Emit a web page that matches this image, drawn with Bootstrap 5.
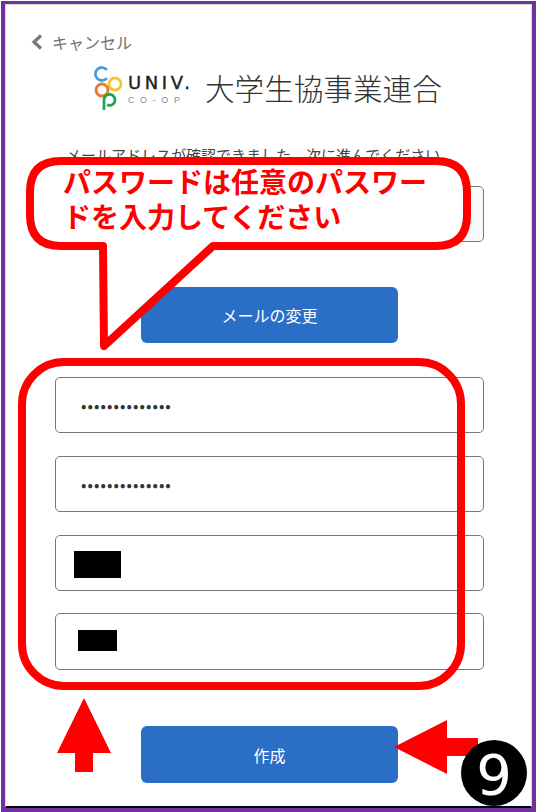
<!DOCTYPE html>
<html lang="ja">
<head>
    <meta charset="UTF-8">
    <meta name="viewport" content="width=device-width, initial-scale=1.0">
    <title>大学生協事業連合 アカウント作成</title>
    <link href="https://cdn.jsdelivr.net/npm/bootstrap@5.3.0/dist/css/bootstrap.min.css" rel="stylesheet">
    <style>
        html, body { height: 100%; overflow: hidden; background: #fff; }
        body { font-family: "Noto Sans CJK JP", "Liberation Sans", sans-serif; }
        .shot-frame { position: relative; width: 535px; height: 811px; margin: 1px 0 0 1px; border: 4px solid #7030a0; border-top-width: 3px; overflow: hidden; }
        .shot-inner { height: 100%; border: 1px solid #d9d9d9; border-bottom: 2px solid #000; padding: 22px 48px 0 25px; }
        .cancel-row { height: 30px; color: #707070; font-size: 16px; }
        .cancel-row svg { margin-right: 9px; }
        .logo-row { height: 50px; margin: 6px 0 0 62px; color: #333; }
        .logo-univ { width: 70px; margin: 0 7px 0 3px; line-height: 1; white-space: nowrap; }
        .logo-univ-top { font: 400 18px "DejaVu Sans", sans-serif; letter-spacing: 3.6px; color: #222; -webkit-text-stroke: .4px #222; }
        .logo-univ-sub { font: 400 9px "Liberation Sans", sans-serif; letter-spacing: 5.6px; color: #8a8a8a; margin-top: 2px; }
        .logo-name { font-size: 29.6px; font-weight: 300; line-height: 1; white-space: nowrap; }
        .notice { margin: 31px 0 0 35px; font-size: 15px; color: #444; line-height: 22px; height: 22px; white-space: nowrap; }
        .shot-input.form-control { display: block; width: 429px; height: 56px; margin-left: 24px; padding: 0 25px; border: 1px solid #777; border-radius: 5px; color: #333; }
        .shot-input[type=password] { letter-spacing: 1.05px; }
        .shot-input.email-box { background: #f8f9fa; margin-top: 20px; }
        .gap-big { margin-top: 23px; }
        .gap-last { margin-top: 22px; height: 57px !important; }
        .shot-btn.btn { display: block; width: 257px; height: 56px; padding: 0; border: 0; border-radius: 6px; background: #2a6ec6; color: #fff; font-size: 16px; font-weight: 400; }
        .btn-one { margin: 45px 0 34px 110px; }
        .shot-btn.btn-two { height: 57px; margin: 56px 0 0 110px; }
        .mark-layer { position: absolute; left: -5px; top: -4px; width: 537px; height: 812px; pointer-events: none; }
        .redact { position: absolute; background: #000; }
        .redact-a { left: 69px; top: 547px; width: 47px; height: 27px; }
        .redact-b { left: 73px; top: 626px; width: 39px; height: 21px; }
        .callout-text { position: absolute; left: 58px; top: 160px; font-size: 28px; font-weight: 700; line-height: 35px; color: #f00; white-space: nowrap; }
        .step-num { font: 400 56px "DejaVu Sans", sans-serif; fill: #fff; }
    </style>
</head>
<body>
    <div class="shot-frame">
        <div class="shot-inner">
            <div class="cancel-row d-flex align-items-center">
                <svg width="12" height="16" viewBox="0 0 12 16"><path d="M10 1.5 3 8l7 6.5" fill="none" stroke="#7a7a7a" stroke-width="3.2"/></svg>
                キャンセル
            </div>
            <div class="logo-row d-flex align-items-center">
                <svg width="32" height="46" viewBox="0 0 32 46">
                    <path d="M14 5a6.5 6.5 0 1 0 0 8" fill="none" stroke="#4a9bd8" stroke-width="2.8"/>
                    <circle cx="22" cy="19" r="6" fill="none" stroke="#f4c52e" stroke-width="2.8"/>
                    <circle cx="9" cy="25" r="6" fill="none" stroke="#e8792c" stroke-width="2.8"/>
                    <path d="M11 45V35a5.5 5.5 0 1 1 3 4.8" fill="none" stroke="#1fa35b" stroke-width="2.8"/>
                </svg>
                <div class="logo-univ">
                    <div class="logo-univ-top">UNIV.</div>
                    <div class="logo-univ-sub">CO-OP</div>
                </div>
                <div class="logo-name">大学生協事業連合</div>
            </div>
            <p class="notice mb-0">メールアドレスが確認できました。次に進んでください</p>
            <input class="form-control shot-input email-box" type="text" readonly>
            <button class="btn shot-btn btn-one" type="button">メールの変更</button>
            <input class="form-control shot-input" type="password" value="aaaaaaaaaaaaaa">
            <input class="form-control shot-input gap-big" type="password" value="aaaaaaaaaaaaaa">
            <input class="form-control shot-input gap-big" type="text">
            <input class="form-control shot-input gap-last" type="text">
            <button class="btn shot-btn btn-two" type="button">作成</button>
        </div>

        <div class="redact redact-a"></div>
        <div class="redact redact-b"></div>

        <svg class="mark-layer" viewBox="0 0 537 812">
            <path d="M70 161H436Q467 161 467 192V215Q467 246 436 246H213L104 346L103 246H61Q30 246 30 215V192Q30 161 61 161Z" fill="#fff" stroke="#f00" stroke-width="8" stroke-linejoin="round"/>
            <rect x="22" y="362" width="439" height="324" rx="42" fill="none" stroke="#f00" stroke-width="8"/>
            <path d="M84 698 111 753H93V772H75V753H57Z" fill="#f00"/>
            <path d="M394 747 447 720V738H478V756H447V774Z" fill="#f00"/>
            <circle cx="494" cy="773" r="33" fill="#000"/>
            <text class="step-num" x="494" y="794" text-anchor="middle">9</text>
        </svg>
        <div class="callout-text">パスワードは任意のパスワー<br>ドを入力してください</div>
    </div>
    <script src="https://cdn.jsdelivr.net/npm/bootstrap@5.3.0/dist/js/bootstrap.bundle.min.js"></script>
</body>
</html>
